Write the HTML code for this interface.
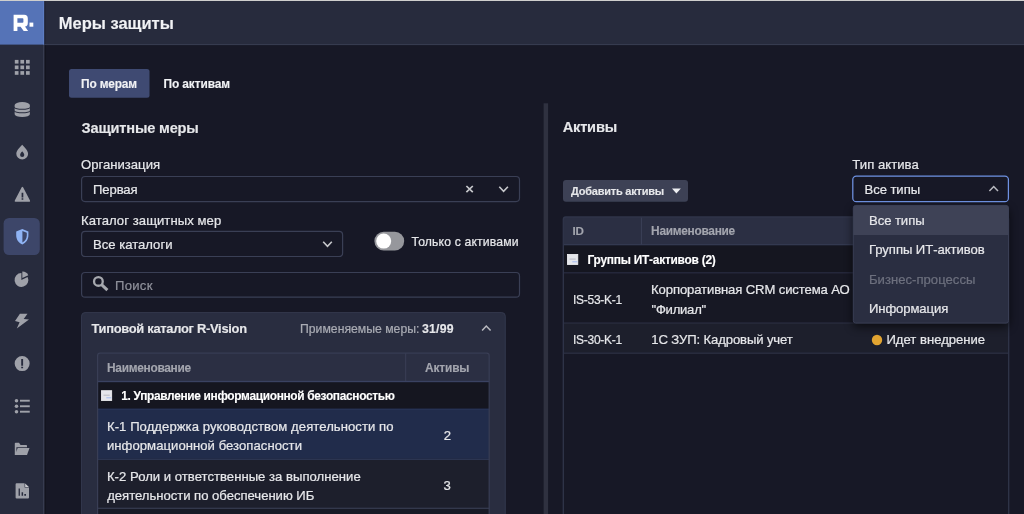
<!DOCTYPE html>
<html lang="ru">
<head>
<meta charset="utf-8">
<title>Меры защиты</title>
<style>
*{box-sizing:border-box;margin:0;padding:0}
html,body{width:1024px;height:514px;overflow:hidden;background:#171826}
body{position:relative;font-family:"Liberation Sans",sans-serif;font-size:13.2px;color:#e6e7ea;line-height:1}
svg{position:absolute;left:0;top:0;display:block}
.t{position:absolute;white-space:nowrap;line-height:1;font-family:"Liberation Sans",sans-serif;-webkit-text-stroke:0.22px currentColor}
.b{font-weight:bold;-webkit-text-stroke:0.14px currentColor}
</style>
</head>
<body>
<svg width="1024" height="514" viewBox="0 0 1024 514">
<!-- chrome -->
<rect x="0" y="0" width="1024" height="514" fill="#171826"/>
<rect x="44.400" y="45" width="1.600" height="469" fill="#11121b" opacity=".6"/>
<rect x="0" y="1" width="43.200" height="513" fill="#272b3d"/>
<rect x="43" y="1" width="1.400" height="513" fill="#373c50"/>
<rect x="44.100" y="1" width="980" height="43.200" fill="#272b3d"/>
<rect x="44.100" y="44" width="980" height="1.100" fill="#363b4f"/>
<rect x="44.100" y="1" width="1.500" height="43" fill="#1f2233" opacity=".7"/>
<rect x="0" y="1" width="44.100" height="43.600" fill="#5573b7"/>
<rect x="43.100" y="1" width="1" height="43.600" fill="#6383cb" opacity=".7"/>
<rect x="0" y="0" width="1024" height="1" fill="#cfcfcd"/>
<path fill="#fff" fill-rule="evenodd" d="M13.600 14.800H24.200Q27.800 14.800 27.800 18.400V23Q27.800 26.100 25 26.600L28.100 31H23.700L20.600 26.700H17.400V31H13.600ZM17.400 18.300V22.700H22.600Q23.400 22.700 23.400 21.900V19.100Q23.400 18.300 22.600 18.300Z"/>
<rect x="29.500" y="22.600" width="3.800" height="4.100" fill="#fff"/>
<rect x="3.600" y="218" width="36.200" height="37.100" rx="5.500" fill="#3d4669"/>
<g fill="#9fa1a9">
<!-- grid -->
<g>
<rect x="14.800" y="59.900" width="3.700" height="3.700"/><rect x="20.400" y="59.900" width="3.700" height="3.700"/><rect x="26" y="59.900" width="3.700" height="3.700"/>
<rect x="14.800" y="65.500" width="3.700" height="3.700"/><rect x="20.400" y="65.500" width="3.700" height="3.700"/><rect x="26" y="65.500" width="3.700" height="3.700"/>
<rect x="14.800" y="71.100" width="3.700" height="3.700"/><rect x="20.400" y="71.100" width="3.700" height="3.700"/><rect x="26" y="71.100" width="3.700" height="3.700"/>
</g>
<!-- database -->
<path d="M14.650 105A7.600 2.950 0 0 1 29.850 105V106.900A7.600 1.800 0 0 1 14.650 106.900Z"/>
<path d="M14.650 108A7.600 1.800 0 0 0 29.850 108V110.400A7.600 1.800 0 0 1 14.650 110.400Z"/>
<path d="M14.650 111.500A7.600 1.800 0 0 0 29.850 111.500V114.200A7.600 2.800 0 0 1 14.650 114.200Z"/>
<!-- drop -->
<path fill-rule="evenodd" d="M22.200 144.700C22.200 144.700 28.100 150 28.100 153.800A5.900 5.700 0 0 1 16.300 153.800C16.300 150 22.200 144.700 22.200 144.700ZM22.200 151.200C22.200 151.200 24.300 153.500 24.300 154.900A2.100 2.100 0 0 1 20.100 154.900C20.100 153.500 22.200 151.200 22.200 151.200Z"/>
<!-- warning triangle -->
<path fill-rule="evenodd" d="M21.700 187.200Q22.400 186.100 23.100 187.200L30 200.500Q30.500 201.800 29.300 201.800H15.500Q14.300 201.800 14.800 200.500ZM21.600 192.800V197.500H23.300V192.800ZM21.600 198.200V199.800H23.300V198.200Z"/>
<!-- shield (active) -->
<path fill="#8fb3f4" fill-rule="evenodd" d="M22.300 229L28.400 231.500V235.600C28.400 239.600 25.800 243 22.300 244.400C18.800 243 16.200 239.600 16.200 235.600V231.500ZM22.400 230.900V242.600C24.900 241.400 26.800 238.700 26.800 235.600V232.700Z"/>
<!-- pie -->
<path d="M21.400 280V273.100A6.900 6.900 0 1 0 27.600 276.900Z"/>
<path d="M22.300 278.100V271.600A6.500 6.500 0 0 1 28.300 275.300Z"/>
<!-- bolt -->
<path d="M19.900 313.800H27.500L23.700 318.900L29 319.500L16.800 328.500L19.600 322.200L15 321.100Z"/>
<!-- exclamation circle -->
<path fill-rule="evenodd" d="M22.150 356.100A7.500 7.500 0 1 1 22.150 371.100A7.500 7.500 0 1 1 22.150 356.100ZM21.200 359.100V365.700H23.100V359.100ZM21.200 366.700V368.300H23.100V366.700Z"/>
<!-- list -->
<g>
<circle cx="16.500" cy="400.700" r="1.800"/><circle cx="16.500" cy="406.250" r="1.800"/><circle cx="16.500" cy="411.700" r="1.800"/>
<rect x="20" y="399.750" width="9.750" height="1.900"/><rect x="20" y="405.300" width="9.750" height="1.900"/><rect x="20" y="410.750" width="9.750" height="1.900"/>
</g>
<!-- folder open -->
<path d="M14.800 443.600Q14.800 442.800 15.600 442.800H19L20.600 445H26.200Q27 445 27 445.800V447.200H16.400V455H14.800Z"/>
<path d="M17.700 448H29.500L27 455H14.900Z"/>
<!-- file chart -->
<path fill-rule="evenodd" d="M16.600 483.300H24.600V487.500H29V497.500Q29 498.500 28 498.500H16.600Q15.600 498.500 15.600 497.500V484.300Q15.600 483.300 16.600 483.300ZM18.600 488.400V495.700H19.900V488.400ZM21.600 492.200V495.700H23.100V492.200ZM24.300 494.100V495.700H26V494.100Z"/>
<path fill="#c9cace" d="M25.200 483.400L28.900 487H25.200Z"/>
</g>

<!-- tabs -->
<rect x="69" y="69" width="80.500" height="28.800" rx="2.500" fill="#3f4a72"/>

<!-- left form -->
<g fill="none" stroke="#3a3f55" stroke-width="1.200">
<rect x="81.600" y="176.500" width="437.900" height="25.100" rx="3.500"/>
<rect x="81.600" y="231.450" width="261" height="25.050" rx="3.500"/>
<rect x="81.600" y="272.500" width="437.900" height="24.700" rx="3.500"/>
</g>
<rect x="374.400" y="231.800" width="29.800" height="18.600" rx="9.300" fill="#96979c"/>
<circle cx="383.700" cy="241.100" r="7.500" fill="#fff"/>

<!-- catalog panel -->
<rect x="81.550" y="312.600" width="423.700" height="215" rx="3.500" fill="#292d40" stroke="#33384d" stroke-width="1"/>
<rect x="97.600" y="353.200" width="391.600" height="170" rx="2.500" fill="#1b1d2a"/>
<path d="M97.600 381.500V355.700Q97.600 353.200 100.100 353.200H486.700Q489.200 353.200 489.200 355.700V381.500Z" fill="#2b2f43"/>
<rect x="405.100" y="353.200" width="1.100" height="28" fill="#393e55"/>
<rect x="97.600" y="382.200" width="391.600" height="26.600" fill="#151620"/>
<rect x="97.600" y="408.800" width="391.600" height="50" fill="#212c4b"/>
<rect x="97.600" y="408.700" width="391.600" height="1" fill="#2a3659"/>
<rect x="97.600" y="458.700" width="391.600" height="1.300" fill="#2c3551"/>
<rect x="97.600" y="460" width="391.600" height="47.600" fill="#1d1f2c"/>
<rect x="97.600" y="507.600" width="391.600" height="1.400" fill="#33384c"/>
<rect x="97.600" y="509" width="391.600" height="10" fill="#181a26"/>
<rect x="97.600" y="380.800" width="391.600" height="1.400" fill="#3a4262"/>
<path d="M97.600 520V355.700Q97.600 353.200 100.100 353.200H486.700Q489.200 353.200 489.200 355.700V520" fill="none" stroke="#393e55" stroke-width="1.200"/>

<!-- splitter -->
<rect x="543.600" y="103.300" width="4.500" height="420" fill="#2f3140"/>

<!-- right panel -->
<rect x="563" y="180.100" width="125" height="21.600" rx="3" fill="#3d4155"/>
<rect x="563.300" y="217" width="445.400" height="300" fill="#171826"/>
<path d="M563.300 244.800V219.500Q563.300 217 565.800 217H1006.200Q1008.700 217 1008.700 219.500V244.800Z" fill="#2b2f43"/>
<rect x="640.900" y="217" width="1.100" height="27.500" fill="#393e55"/>
<rect x="563.300" y="244.200" width="445.400" height="1.300" fill="#373d56"/>
<rect x="563.300" y="245.500" width="445.400" height="26.800" fill="#151620"/>
<rect x="563.300" y="272.300" width="445.400" height="1.300" fill="#2b3045"/>
<rect x="563.300" y="273.600" width="445.400" height="49" fill="#171824"/>
<rect x="563.300" y="322.500" width="445.400" height="1.300" fill="#2d3144"/>
<rect x="563.300" y="323.800" width="445.400" height="28.700" fill="#1d1f2c"/>
<rect x="563.300" y="352.500" width="445.400" height="1.300" fill="#2d3144"/>
<path d="M563.300 520V219.500Q563.300 217 565.800 217H1006.200Q1008.700 217 1008.700 219.500V520" fill="none" stroke="#30354a" stroke-width="1.300"/>
<circle cx="877" cy="340" r="5.200" fill="#e2a431"/>

<!-- type select + dropdown -->
<rect x="852.800" y="176.100" width="155.600" height="25.600" rx="3.500" fill="#171826" stroke="#6f92e3" stroke-width="1.250"/>
<defs><filter id="sh" x="-20%" y="-20%" width="140%" height="140%"><feGaussianBlur stdDeviation="5"/></filter></defs>
<rect x="853" y="209" width="156" height="118" rx="4" fill="#000" opacity=".6" filter="url(#sh)"/>
<rect x="853.300" y="205.400" width="155.200" height="117.700" rx="2.500" fill="#2a2e41" stroke="#393e54" stroke-width="1"/>
<path d="M853.300 235.100V207.900Q853.300 205.400 855.800 205.400H1006Q1008.500 205.400 1008.500 207.900V235.100Z" fill="#3e4256"/>

<!-- form icons -->
<g fill="none">
<path d="M466.400 186L472.800 192.200M472.800 186L466.400 192.200" stroke="#c6c7cb" stroke-width="1.700"/>
<path d="M499.300 186.800L503.600 191.400L507.900 186.800" stroke="#c6c7cb" stroke-width="1.600"/>
<path d="M323.200 241.800L327.500 246.400L331.800 241.800" stroke="#c6c7cb" stroke-width="1.600"/>
<path d="M482.100 330.600L486.300 326L490.600 330.600" stroke="#b9bac0" stroke-width="1.500"/>
<path d="M989.400 191.100L993.700 186.500L998 191.100" stroke="#b9bac0" stroke-width="1.500"/>
<circle cx="98.400" cy="281.400" r="4.350" stroke="#a6a8ae" stroke-width="2.300"/>
<path d="M101.600 284.600L107.400 290.100" stroke="#a6a8ae" stroke-width="3"/>
</g>
<path d="M672 188.400H680.800L676.400 193.400Z" fill="#eeeff2"/>
<g>
<rect x="101.400" y="390.700" width="10.300" height="9.800" fill="#e5e6eb" stroke="#f4f4f7" stroke-width="0.800"/>
<path d="M103.500 395.200H109.700" stroke="#b4b6be" stroke-width="0.900"/>
<path d="M106.300 397.800H111.300" stroke="#a3baf0" stroke-width="1"/>
</g>
<g>
<rect x="567.400" y="254.400" width="10.400" height="10.100" fill="#e5e6eb" stroke="#f4f4f7" stroke-width="0.800"/>
<path d="M569.500 259.100H575.700" stroke="#b4b6be" stroke-width="0.900"/>
<path d="M572.300 261.800H577.300" stroke="#a3baf0" stroke-width="1"/>
</g>
</svg>
<div id="tx" style="position:absolute;left:0;top:0;width:1024px;height:514px;will-change:transform">
<div class="t b" id="title" style="left:58.81px;top:14.90px;font-size:16.5px;color:#f1f2f5;letter-spacing:-0.012px">Меры защиты</div>
<div class="t b" id="tab1" style="left:81.00px;top:78.75px;font-size:11.9px;color:#f1f2f5;letter-spacing:-0.162px">По мерам</div>
<div class="t b" id="tab2" style="left:163.50px;top:78.75px;font-size:11.9px;color:#f1f2f5;letter-spacing:-0.088px">По активам</div>
<div class="t b" id="h1" style="left:81.53px;top:120.60px;font-size:14.6px;color:#e6e7ea;letter-spacing:-0.178px">Защитные меры</div>
<div class="t" id="lorg" style="left:80.99px;top:158.00px;font-size:13.1px;color:#e6e7ea;letter-spacing:0.009px">Организация</div>
<div class="t" id="vorg" style="left:92.98px;top:183.25px;font-size:13.1px;color:#e6e7ea;letter-spacing:-0.097px">Первая</div>
<div class="t" id="lcat" style="left:80.98px;top:213.50px;font-size:13.1px;color:#e6e7ea;letter-spacing:0.066px">Каталог защитных мер</div>
<div class="t" id="vcat" style="left:92.98px;top:238.25px;font-size:13.1px;color:#e6e7ea">Все каталоги</div>
<div class="t" id="tgl" style="left:411.50px;top:236.25px;font-size:12.2px;color:#e6e7ea;letter-spacing:0.154px">Только с активами</div>
<div class="t" id="srch" style="left:114.98px;top:278.50px;font-size:13.1px;color:#8f919b;letter-spacing:0.280px">Поиск</div>
<div class="t b" id="cat" style="left:91.40px;top:322.75px;font-size:12.9px;color:#e6e7ea;letter-spacing:-0.278px">Типовой каталог R-Vision</div>
<div class="t" id="appl" style="left:300.05px;top:322.75px;font-size:12.2px;color:#a9abb3;letter-spacing:0.019px">Применяемые меры:</div>
<div class="t b" id="cnt" style="left:421.90px;top:322.75px;font-size:12.3px;color:#e6e7ea;letter-spacing:0.242px">31/99</div>
<div class="t b" id="hn1" style="left:107.00px;top:362.60px;font-size:11.9px;color:#a3a5ae;letter-spacing:-0.282px">Наименование</div>
<div class="t b" id="ha1" style="left:425.02px;top:362.60px;font-size:11.9px;color:#a3a5ae;letter-spacing:-0.127px">Активы</div>
<div class="t b" id="grp1" style="left:121.25px;top:391.25px;font-size:11.9px;color:#ffffff;letter-spacing:-0.319px">1. Управление информационной безопасностью</div>
<div class="t" id="r1a" style="left:106.98px;top:420.00px;font-size:13.1px;color:#e6e7ea;letter-spacing:0.064px">К-1 Поддержка руководством деятельности по</div>
<div class="t" id="r1b" style="left:106.99px;top:438.80px;font-size:13.1px;color:#e6e7ea;letter-spacing:0.047px">информационной безопасности</div>
<div class="t" id="n2" style="left:443.72px;top:429.00px;font-size:13.1px;color:#e6e7ea">2</div>
<div class="t" id="r2a" style="left:106.98px;top:469.60px;font-size:13.1px;color:#e6e7ea;letter-spacing:0.022px">К-2 Роли и ответственные за выполнение</div>
<div class="t" id="r2b" style="left:107.20px;top:488.70px;font-size:13.1px;color:#e6e7ea;letter-spacing:-0.020px">деятельности по обеспечению ИБ</div>
<div class="t" id="n3" style="left:443.62px;top:479.00px;font-size:13.1px;color:#e6e7ea">3</div>
<div class="t b" id="h2" style="left:562.77px;top:120.10px;font-size:14.6px;color:#e6e7ea;letter-spacing:-0.212px">Активы</div>
<div class="t b" id="add" style="left:571.05px;top:185.90px;font-size:11.0px;color:#e6e7ea;letter-spacing:-0.226px">Добавить активы</div>
<div class="t" id="ltype" style="left:852.30px;top:158.25px;font-size:13.1px;color:#e6e7ea;letter-spacing:0.048px">Тип актива</div>
<div class="t" id="vtype" style="left:864.48px;top:182.75px;font-size:13.1px;color:#e6e7ea;letter-spacing:-0.059px">Все типы</div>
<div class="t" id="d1" style="left:868.98px;top:214.00px;font-size:13.1px;color:#e6e7ea;letter-spacing:-0.059px">Все типы</div>
<div class="t" id="d2" style="left:868.98px;top:243.25px;font-size:13.1px;color:#e6e7ea;letter-spacing:-0.054px">Группы ИТ-активов</div>
<div class="t" id="d3" style="left:868.98px;top:272.50px;font-size:13.1px;color:#6d707e;letter-spacing:0.021px">Бизнес-процессы</div>
<div class="t" id="d4" style="left:868.98px;top:302.00px;font-size:13.1px;color:#e6e7ea;letter-spacing:-0.102px">Информация</div>
<div class="t b" id="hid" style="left:572.60px;top:225.20px;font-size:11.6px;color:#a3a5ae;letter-spacing:-0.413px">ID</div>
<div class="t b" id="hn2" style="left:651.10px;top:226.20px;font-size:11.9px;color:#a3a5ae;letter-spacing:-0.282px">Наименование</div>
<div class="t b" id="grp2" style="left:587.50px;top:254.60px;font-size:11.9px;color:#ffffff;letter-spacing:-0.229px">Группы ИТ-активов (2)</div>
<div class="t" id="id1" style="left:573.07px;top:293.00px;font-size:13.1px;color:#e6e7ea;letter-spacing:-0.3px;transform:scaleX(0.9151);transform-origin:0 0">IS-53-K-1</div>
<div class="t" id="nm1a" style="left:651.08px;top:283.40px;font-size:13.1px;color:#e6e7ea;letter-spacing:-0.121px">Корпоративная CRM система АО</div>
<div class="t" id="nm1b" style="left:651.50px;top:303.00px;font-size:13.1px;color:#e6e7ea;letter-spacing:-0.252px">&quot;Филиал&quot;</div>
<div class="t" id="id2" style="left:573.07px;top:333.30px;font-size:13.1px;color:#e6e7ea;letter-spacing:-0.3px;transform:scaleX(0.9151);transform-origin:0 0">IS-30-K-1</div>
<div class="t" id="nm2" style="left:651.29px;top:333.30px;font-size:13.1px;color:#e6e7ea;letter-spacing:-0.113px">1С ЗУП: Кадровый учет</div>
<div class="t" id="st2" style="left:886.48px;top:333.25px;font-size:13.1px;color:#e6e7ea;letter-spacing:-0.007px">Идет внедрение</div>
</div>
</body>
</html>
